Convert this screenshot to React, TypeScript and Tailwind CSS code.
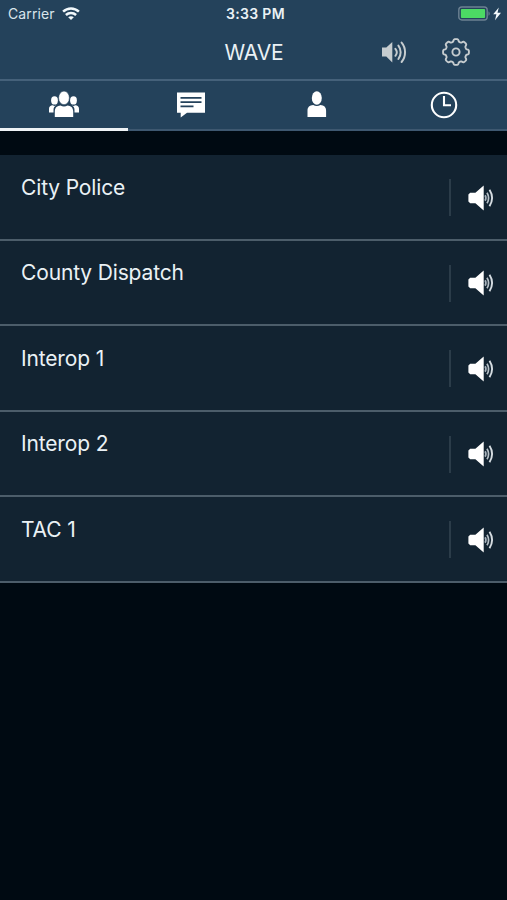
import React from "react";

const font = "font-[Inter,'Liberation_Sans',sans-serif]";

function Wifi() {
  return (
    <svg width="18" height="14" viewBox="0 0 18 14" fill="none" stroke="#f3f9fc" strokeWidth="2.5">
      <path d="M1.1 4.7C5.6.4 12.4.4 16.9 4.7" />
      <path d="M3.9 8c2.9-2.7 7.3-2.7 10.2 0" />
      <path d="M6.2 10.2c1.6-1.3 4-1.3 5.6 0L9 13z" fill="#f3f9fc" stroke="none" />
    </svg>
  );
}

function Battery() {
  return (
    <svg width="44" height="16" viewBox="0 0 44 16">
      <rect x=".8" y="1" width="28.4" height="13" rx="3" fill="none" stroke="#6c8192" strokeWidth="1.4" />
      <rect x="2.9" y="3.1" width="24.2" height="8.8" rx="1" fill="#4cd964" />
      <path d="M30.5 5.2c1.6.8 1.6 3.8 0 4.6z" fill="#6c8192" />
      <path d="M40.8 1.6 35.2 8.3h3.2L37 14.2l6-7.4h-3.5z" fill="#f5fafd" />
    </svg>
  );
}

function HeaderSpeaker() {
  return (
    <svg width="26" height="24" viewBox="0 0 26 24" fill="none" stroke="#c6cccf" strokeWidth="2" strokeLinecap="round">
      <path d="M1 7.6h4.3l6-5.6v20.4l-6-5.8H1z" fill="#c6cccf" stroke="none" />
      <path d="M14.4 8.8c1.7 2 1.7 5 0 7" />
      <path d="M17.4 5.6c3 3.9 3 9.5 0 13.4" />
      <path d="M20.6 2.6c4.6 5.3 4.6 14.1 0 19.4" />
    </svg>
  );
}

// Eight rounded teeth: the radius swings between the notch and the tooth tip.
const gearPoints = Array.from({ length: 160 }, (_, i) => {
  const a = (i / 160) * Math.PI * 2;
  const r = 11.7 + 1.25 * Math.tanh(2.2 * (Math.cos(8 * a) + 0.15));
  return `${(14 + r * Math.cos(a)).toFixed(2)},${(14 + r * Math.sin(a)).toFixed(2)}`;
}).join(" ");

function Gear() {
  return (
    <svg width="28" height="28" viewBox="0 0 28 28" fill="none" stroke="#c6cccf" strokeWidth="1.9" strokeLinejoin="round">
      <polygon points={gearPoints} />
      <circle cx="14" cy="14" r="3.6" />
    </svg>
  );
}

function Group() {
  return (
    <svg width="30" height="27" viewBox="0 0 30 27" fill="#fff">
      <ellipse cx="5.5" cy="9.4" rx="3.4" ry="4.2" />
      <ellipse cx="24.5" cy="9.4" rx="3.4" ry="4.2" />
      <path d="M0 21.4v-3.7c0-2.4 1.6-3.4 3.6-3.5l1.9.8 1.7-.7c-2 1.2-2.7 2.6-2.7 4.8v2.3z" />
      <path d="M30 21.4v-3.7c0-2.4-1.6-3.4-3.6-3.5l-1.9.8-1.7-.7c2 1.2 2.7 2.6 2.7 4.8v2.3z" />
      <ellipse cx="15" cy="6.9" rx="5.4" ry="6.8" stroke="#24425b" strokeWidth=".6" />
      <path d="M5.8 26v-5.4c0-4.4 2.6-6 5.7-6.2 2.1 1.3 4.9 1.3 7 0 3.1.2 5.7 1.8 5.7 6.2V26z" />
    </svg>
  );
}

function Chat() {
  return (
    <svg width="28" height="26" viewBox="0 0 28 26">
      <path d="M0 .5h28v20.2H10L3.7 25.5v-4.8H0z" fill="#fff" />
      <path d="M3.5 5.8h21M3.5 10.2h21M3.5 14.3h13" stroke="#24425b" strokeWidth="1.7" />
    </svg>
  );
}

function Person() {
  return (
    <svg width="20" height="27" viewBox="0 0 20 27" fill="#fff">
      <ellipse cx="9.8" cy="7" rx="5" ry="6.7" />
      <path d="M.5 26v-6.3c0-3.8 2.1-5.4 5.7-5.8 2.2 1.5 5 1.5 7.2 0 3.6.4 5.7 2 5.7 5.8V26z" />
    </svg>
  );
}

function Clock() {
  return (
    <svg width="28" height="28" viewBox="0 0 28 28" fill="none" stroke="#fff" strokeWidth="2.1">
      <circle cx="14" cy="14" r="12.2" />
      <path d="M14 5v9.2h7" />
    </svg>
  );
}

function RowSpeaker() {
  return (
    <svg width="26" height="26" viewBox="0 0 26 26" fill="none">
      <path d="M2.2 7.7h5.2L15.7.4v25.2l-8.3-7.3H2.2L.4 16.5v-7z" fill="#fff" />
      <path d="M17.1 10.2c1 1.7 1 3.9 0 5.6" stroke="#a8b3bc" strokeWidth="1.7" />
      <path d="M19 7.7c2 3.3 2 7.3 0 10.6" stroke="#b5bfc6" strokeWidth="1.7" />
      <path d="M21.5 4.8c3.3 5.2 3.3 11.2 0 16.4" stroke="#d5dce1" strokeWidth="1.9" />
    </svg>
  );
}

const channels = ["City Police", "County Dispatch", "Interop 1", "Interop 2", "TAC 1"];

export default function App() {
  return (
    <div className={`flex h-[900px] w-[507px] flex-col overflow-hidden bg-[#000a12] text-[#eaf1f5] ${font}`}>
      <header className="h-[81px] border-b-2 border-[#45617a] bg-[#24425b]">
        <div className="grid h-7 grid-cols-3 items-center">
          <div className="flex items-center gap-[7px] pl-[8px] text-[14px] tracking-[0.1px] text-[#d9e5ec]">
            <span className="pb-[2px]">Carrier</span>
            <Wifi />
          </div>
          <div className="pb-[2px] pl-[4px] text-center text-[14px] font-semibold tracking-[0.3px]">3:33 PM</div>
          <div className="flex justify-end pr-[5px]">
            <Battery />
          </div>
        </div>
        <div className="grid h-[48px] grid-cols-3 items-center">
          <h1 className="col-start-2 pl-px text-center text-[21px] font-normal leading-none tracking-[-0.2px]">WAVE</h1>
          <div className="flex items-center justify-end gap-[35px] pr-[37.5px]">
            <HeaderSpeaker />
            <Gear />
          </div>
        </div>
      </header>
      <nav className="grid h-[50px] grid-cols-[128px_126px_126px_127px] bg-[#24425b]">
        <div className="flex items-start justify-center border-b-[3px] border-[#eef3f6] pt-[10px]"><Group /></div>
        <div className="flex items-start justify-center border-b-2 border-[#3e5870] pt-[11px]"><Chat /></div>
        <div className="flex items-start justify-center border-b-2 border-[#3e5870] pt-[10px]"><Person /></div>
        <div className="flex items-start justify-center border-b-2 border-[#3e5870] pt-[10px]"><Clock /></div>
      </nav>
      <main className="mt-[24px]">
        {channels.map((name) => (
          <div key={name} className="flex h-[85.5px] justify-between border-b-2 border-[#4c5d6a] bg-[#122331]">
            <span className="pl-[21px] pt-[18.5px] text-[21px] leading-[28px] tracking-[-0.15px]">{name}</span>
            <div className="mt-[24px] flex h-[37px] items-center border-l-2 border-[#2b3c49] pl-[17px] pr-[13px]">
              <RowSpeaker />
            </div>
          </div>
        ))}
      </main>
    </div>
  );
}
